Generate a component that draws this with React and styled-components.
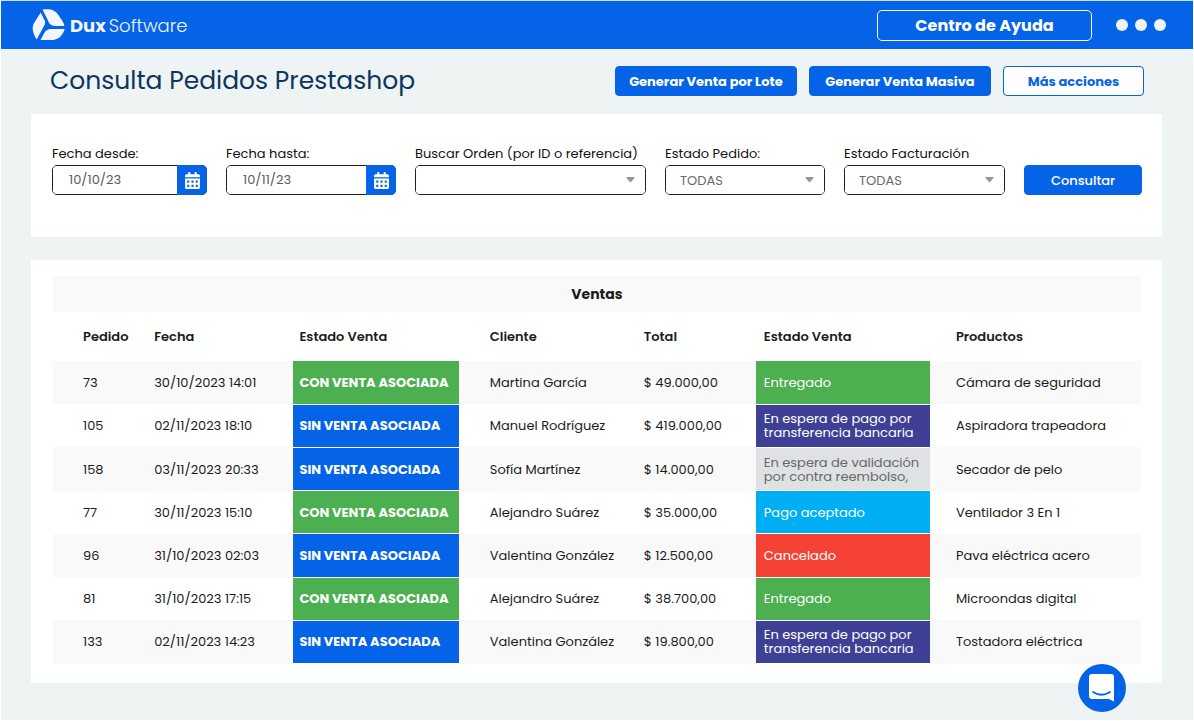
import React from "react";
import styled, { createGlobalStyle, css } from "styled-components";
import { FaCalendarAlt } from "react-icons/fa";

const blue = "#0563e8";
const green = "#4caf50";

const GlobalStyle = createGlobalStyle`
  *, *::before, *::after { box-sizing: border-box; }
  body { margin: 0; background: #eef4f4; }
  body, button, input, select { font-family: Poppins, Inter, "Liberation Sans", sans-serif; }
`;

const Page = styled.div`
  min-height: 100vh;
  border: 1px solid #fff;
  border-top-color: #cfe1fb;
  background: #eef4f4;
  color: #1c1c1c;
`;

const TopBar = styled.header`
  display: flex;
  align-items: center;
  justify-content: space-between;
  height: 48px;
  padding: 0 27px 0 31px;
  background: ${blue};
`;

const Brand = styled.a`
  display: flex;
  align-items: center;
  gap: 5px;
  color: #f2f5fd;
  font-size: 18px;
  line-height: 24px;
  text-decoration: none;
`;

const BrandName = styled.span`
  padding-top: 2px;
  font-weight: 300;
  b { font-weight: 700; margin-right: 3px; }
`;

const TopActions = styled.div`
  display: flex;
  align-items: center;
  gap: 24px;
`;

const HelpLink = styled.a`
  width: 215px;
  height: 31px;
  border: 1px solid #fff;
  border-radius: 5px;
  color: #fff;
  font-size: 16px;
  font-weight: 700;
  line-height: 30px;
  text-align: center;
  text-decoration: none;
`;

const DotsButton = styled.button`
  display: flex;
  gap: 7px;
  padding: 0;
  border: 0;
  background: none;
  cursor: pointer;
`;

const Dot = styled.span`
  width: 12px;
  height: 12px;
  border-radius: 50%;
  background: #eef4f4;
`;

const Main = styled.main`
  padding: 0 31px 0 30px;
`;

const TitleRow = styled.div`
  display: flex;
  align-items: center;
  justify-content: space-between;
  height: 65px;
  padding: 0 18px 2px 19px;
`;

const Title = styled.h1`
  margin: 0;
  color: #0d3560;
  font-size: 25px;
  font-weight: 400;
  line-height: 36px;
`;

const Actions = styled.div`
  display: flex;
  gap: 12px;
`;

const Button = styled.button`
  height: 30px;
  min-width: ${(p) => (p.$outline ? "141px" : "182px")};
  padding: 2px 0 0;
  border: 1px solid ${blue};
  border-radius: 4px;
  background: ${(p) => (p.$outline ? "#fff" : blue)};
  color: ${(p) => (p.$outline ? blue : "#fff")};
  font-size: 13px;
  font-weight: ${(p) => (p.$medium ? 500 : 700)};
  cursor: pointer;
  ${(p) => p.$fill && css`min-width: 0; width: 100%;`}
`;

const Filters = styled.form`
  display: grid;
  grid-template-columns: 155fr 170fr 231fr 160fr 161fr 118fr;
  column-gap: 19px;
  align-items: end;
  padding: 28px 20px 42px 21px;
  background: #fff;
`;

const Field = styled.div`
  min-width: 0;
`;

const Label = styled.label`
  display: block;
  color: #111;
  font-size: 13px;
  line-height: 23px;
  white-space: nowrap;
`;

const Control = styled.div`
  position: relative;
  display: flex;
  height: 30px;
  border: 1px solid #1f1f1f;
  border-radius: 5px;
`;

const DateInput = styled.input`
  flex: 1;
  min-width: 0;
  padding: 0 0 0 16px;
  border: 0;
  border-radius: 4px 0 0 4px;
  background: #fff;
  color: #5c5c5c;
  font-size: 13px;
`;

const CalendarButton = styled.button`
  display: grid;
  place-items: center;
  width: 30px;
  height: 30px;
  margin: -1px -1px -1px 0;
  padding: 0;
  border: 0;
  border-radius: 0 5px 5px 0;
  background: ${blue};
  color: #fff;
  font-size: 17px;
`;

const Select = styled.select`
  width: 100%;
  padding: 0 30px 0 14px;
  border: 0;
  border-radius: 4px;
  appearance: none;
  background: #fff;
  color: #6b6b6b;
  font-size: 13px;
`;

const Caret = styled.svg`
  position: absolute;
  top: 11px;
  right: 10px;
  pointer-events: none;
`;

const Sales = styled.section`
  margin-top: 23px;
  padding: 16px 21px 19px 22px;
  background: #fff;
`;

const SalesTitle = styled.h2`
  margin: 0;
  background: #f9f9f9;
  font-size: 14px;
  font-weight: 700;
  line-height: 36px;
  text-align: center;
`;

const Table = styled.table`
  width: 100%;
  height: 352px;
  border-collapse: collapse;
  table-layout: fixed;
  font-size: 13px;
  line-height: 14px;
`;

const HeadRow = styled.tr`
  height: 49px;
`;

const Row = styled.tr`
  height: 43px;
  &:nth-child(odd) { background: #f9f9f9; }
`;

const cell = css`
  padding: 1px 0 0 ${(p) => p.$pad}px;
  text-align: left;
  white-space: nowrap;
`;

const Th = styled.th`
  ${cell}
  font-weight: 600;
`;

const Td = styled.td`
  ${cell}
`;

const StatusTd = styled.td`
  ${cell}
  border-bottom: 1px solid #fff;
  background: ${(p) => p.$bg};
  background-clip: padding-box;
  color: ${(p) => p.$color || "#fff"};
  font-weight: ${(p) => (p.$strong ? 700 : 400)};
  white-space: pre-line;
`;

const ChatButton = styled.button`
  position: fixed;
  right: 68px;
  bottom: 9px;
  display: grid;
  place-items: center;
  width: 48px;
  height: 48px;
  padding: 0;
  border: 0;
  border-radius: 50%;
  background: ${blue};
  cursor: pointer;
`;

const columns = [
  { name: "Pedido", width: "9.3%", pad: 30 },
  { name: "Fecha", width: "12.8%", pad: 0 },
  { name: "Estado Venta", width: "15.2%", pad: 6 },
  { name: "Cliente", width: "15.9%", pad: 31 },
  { name: "Total", width: "11.4%", pad: 12 },
  { name: "Estado Venta", width: "16%", pad: 8 },
  { name: "Productos", width: "19.4%", pad: 26 },
];

const states = {
  delivered: { text: "Entregado", bg: green },
  transfer: { text: "En espera de pago por\ntransferencia bancaria", bg: "#3e4095" },
  validation: { text: "En espera de validación\npor contra reembolso,", bg: "#dfe1e3", color: "#66686b" },
  accepted: { text: "Pago aceptado", bg: "#00aff3" },
  cancelled: { text: "Cancelado", bg: "#f64235" },
};

const orders = [
  { id: 73, date: "30/10/2023 14:01", linked: true, client: "Martina García", total: "$ 49.000,00", state: "delivered", product: "Cámara de seguridad" },
  { id: 105, date: "02/11/2023 18:10", linked: false, client: "Manuel Rodríguez", total: "$ 419.000,00", state: "transfer", product: "Aspiradora trapeadora" },
  { id: 158, date: "03/11/2023 20:33", linked: false, client: "Sofía Martínez", total: "$ 14.000,00", state: "validation", product: "Secador de pelo" },
  { id: 77, date: "30/11/2023 15:10", linked: true, client: "Alejandro Suárez", total: "$ 35.000,00", state: "accepted", product: "Ventilador 3 En 1" },
  { id: 96, date: "31/10/2023 02:03", linked: false, client: "Valentina González", total: "$ 12.500,00", state: "cancelled", product: "Pava eléctrica acero" },
  { id: 81, date: "31/10/2023 17:15", linked: true, client: "Alejandro Suárez", total: "$ 38.700,00", state: "delivered", product: "Microondas digital" },
  { id: 133, date: "02/11/2023 14:23", linked: false, client: "Valentina González", total: "$ 19.800,00", state: "transfer", product: "Tostadora eléctrica" },
];

function Logo() {
  return (
    <svg width="33" height="32" viewBox="0 0 33 32" fill="#f2f5fd" aria-hidden="true">
      <path d="M10.500 .5C20 -.5 23 1.500 26 5.500L30.500 12Q32 14.500 32.300 17H23C18 17 16.500 13 15.500 10.500Z" />
      <path d="M8.700 3.500L12.700 11.500C13.500 13.500 13 15 12 17L4.700 30.500C1.500 25.500 -.5 20 1.500 15Z" />
      <path d="M32.700 20C30 28.500 25 31 19 31H8.500L12 24.500C13.500 21.500 15.500 20 19 20Z" />
    </svg>
  );
}

function DateField({ id, label, value }) {
  return (
    <Field>
      <Label htmlFor={id}>{label}</Label>
      <Control>
        <DateInput id={id} type="text" defaultValue={value} />
        <CalendarButton type="button" aria-label="Abrir calendario">
          <FaCalendarAlt />
        </CalendarButton>
      </Control>
    </Field>
  );
}

function SelectField({ id, label, option }) {
  return (
    <Field>
      <Label htmlFor={id}>{label}</Label>
      <Control>
        <Select id={id}>
          <option>{option}</option>
        </Select>
        <Caret width="9" height="6" viewBox="0 0 9 6" fill="#969696" aria-hidden="true">
          <path d="M1 0h7q1 0 .5 1L5 5q-.5.5-1 0L.5 1Q0 0 1 0z" />
        </Caret>
      </Control>
    </Field>
  );
}

export default function App() {
  return (
    <>
      <GlobalStyle />
      <Page>
        <TopBar>
          <Brand href="#">
            <Logo />
            <BrandName><b>Dux</b>Software</BrandName>
          </Brand>
          <TopActions>
            <HelpLink href="#">Centro de Ayuda</HelpLink>
            <DotsButton type="button" aria-label="Menú">
              <Dot /><Dot /><Dot />
            </DotsButton>
          </TopActions>
        </TopBar>
        <Main>
          <TitleRow>
            <Title>Consulta Pedidos Prestashop</Title>
            <Actions>
              <Button type="button">Generar Venta por Lote</Button>
              <Button type="button">Generar Venta Masiva</Button>
              <Button type="button" $outline>Más acciones</Button>
            </Actions>
          </TitleRow>
          <Filters>
            <DateField id="desde" label="Fecha desde:" value="10/10/23" />
            <DateField id="hasta" label="Fecha hasta:" value="10/11/23" />
            <SelectField id="orden" label="Buscar Orden (por ID o referencia)" option="" />
            <SelectField id="pedido" label="Estado Pedido:" option="TODAS" />
            <SelectField id="facturacion" label="Estado Facturación" option="TODAS" />
            <Button type="button" $fill $medium>Consultar</Button>
          </Filters>
          <Sales>
            <SalesTitle id="ventas">Ventas</SalesTitle>
            <Table aria-labelledby="ventas">
              <colgroup>
                {columns.map((c, i) => <col key={i} width={c.width} />)}
              </colgroup>
              <thead>
                <HeadRow>
                  {columns.map((c, i) => <Th key={i} scope="col" $pad={c.pad}>{c.name}</Th>)}
                </HeadRow>
              </thead>
              <tbody>
                {orders.map((o) => {
                  const state = states[o.state];
                  return (
                    <Row key={o.id}>
                      <Td $pad={30}>{o.id}</Td>
                      <Td $pad={0}>{o.date}</Td>
                      <StatusTd $pad={6} $bg={o.linked ? green : blue} $strong>
                        {o.linked ? "CON VENTA ASOCIADA" : "SIN VENTA ASOCIADA"}
                      </StatusTd>
                      <Td $pad={31}>{o.client}</Td>
                      <Td $pad={12}>{o.total}</Td>
                      <StatusTd $pad={8} $bg={state.bg} $color={state.color}>{state.text}</StatusTd>
                      <Td $pad={26}>{o.product}</Td>
                    </Row>
                  );
                })}
              </tbody>
            </Table>
          </Sales>
        </Main>
        <ChatButton type="button" aria-label="Chat">
          <svg width="26" height="28" viewBox="0 0 26 28" aria-hidden="true">
            <path d="M3 0h19q3 0 3 3v24.500l-5-2.500H3q-3 0-3-3V3q0-3 3-3z" fill="#fff" />
            <path d="M4 18q8.500 5.500 17 0" fill="none" stroke={blue} strokeWidth="1.800" strokeLinecap="round" />
          </svg>
        </ChatButton>
      </Page>
    </>
  );
}
